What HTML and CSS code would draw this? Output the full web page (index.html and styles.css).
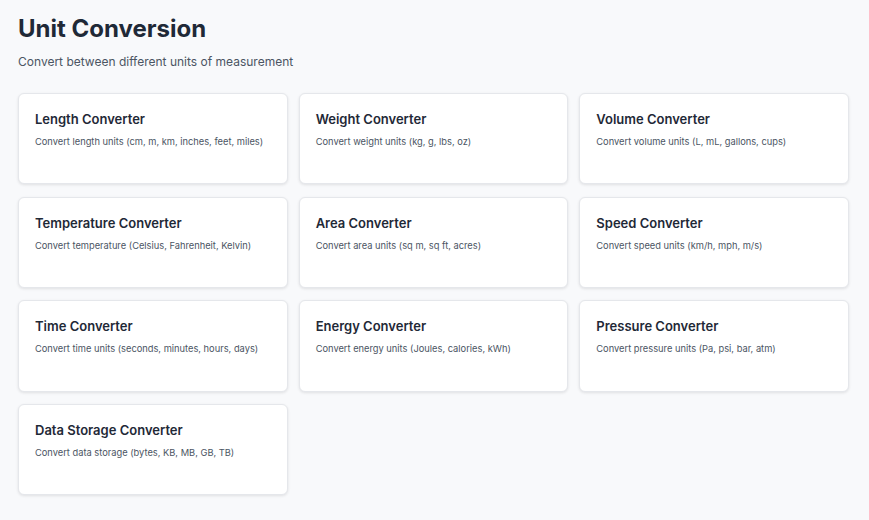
FILE: index.html
```html
<!DOCTYPE html>
<html lang="en">
<head>
    <meta charset="UTF-8">
    <meta name="viewport" content="width=device-width, initial-scale=1.0">
    <title>Unit Conversion</title>
    <link rel="stylesheet" href="styles.css">
</head>
<body>
    <div class="container">
        <!-- Header -->
        <div class="header">
            <h1>Unit Conversion</h1>
            <p>Convert between different units of measurement</p>
        </div>

        <!-- Converter cards -->
        <div class="converter-grid">
            <div class="card">
                <h3>Length Converter</h3>
                <p>Convert length units (cm, m, km, inches, feet, miles)</p>
            </div>
            <div class="card">
                <h3>Weight Converter</h3>
                <p>Convert weight units (kg, g, lbs, oz)</p>
            </div>
            <div class="card">
                <h3>Volume Converter</h3>
                <p>Convert volume units (L, mL, gallons, cups)</p>
            </div>
            <div class="card">
                <h3>Temperature Converter</h3>
                <p>Convert temperature (Celsius, Fahrenheit, Kelvin)</p>
            </div>
            <div class="card">
                <h3>Area Converter</h3>
                <p>Convert area units (sq m, sq ft, acres)</p>
            </div>
            <div class="card">
                <h3>Speed Converter</h3>
                <p>Convert speed units (km/h, mph, m/s)</p>
            </div>
            <div class="card">
                <h3>Time Converter</h3>
                <p>Convert time units (seconds, minutes, hours, days)</p>
            </div>
            <div class="card">
                <h3>Energy Converter</h3>
                <p>Convert energy units (Joules, calories, kWh)</p>
            </div>
            <div class="card">
                <h3>Pressure Converter</h3>
                <p>Convert pressure units (Pa, psi, bar, atm)</p>
            </div>
            <div class="card">
                <h3>Data Storage Converter</h3>
                <p>Convert data storage (bytes, KB, MB, GB, TB)</p>
            </div>
        </div>
    </div>
</body>
</html>
```

FILE: styles.css
```css
/* Global Styles */
* {
    margin: 0;
    padding: 0;
    box-sizing: border-box;
    font-family: 'Inter', 'Liberation Sans', Arial, sans-serif;
}

body {
    background: #f8f9fb;
    color: #1f2937;
}

.container {
    padding: 14px 20px 20px 18px;
}

.header {
    margin-bottom: 23px;
}

.header h1 {
    font-size: 24px;
    font-weight: 700;
    line-height: 30px;
    color: #1f2937;
    margin-bottom: 10px;
}

.header p {
    font-size: 12px;
    line-height: 16px;
    color: #4b5563;
}

.converter-grid {
    display: grid;
    grid-template-columns: repeat(3, 1fr);
    gap: 12.3px 11px;
}

.card {
    background: #fff;
    border: 1px solid #e5e7eb;
    border-radius: 6px;
    box-shadow: 0 1px 3px rgba(0, 0, 0, 0.1);
    min-height: 91.4px;
    padding: 16px 16px;
}

.card h3 {
    font-size: 13px;
    font-weight: 600;
    line-height: 18px;
    color: #1f2937;
    margin-bottom: 7px;
}

.card p {
    font-size: 9.3px;
    line-height: 13px;
    color: #4b5563;
}
```
